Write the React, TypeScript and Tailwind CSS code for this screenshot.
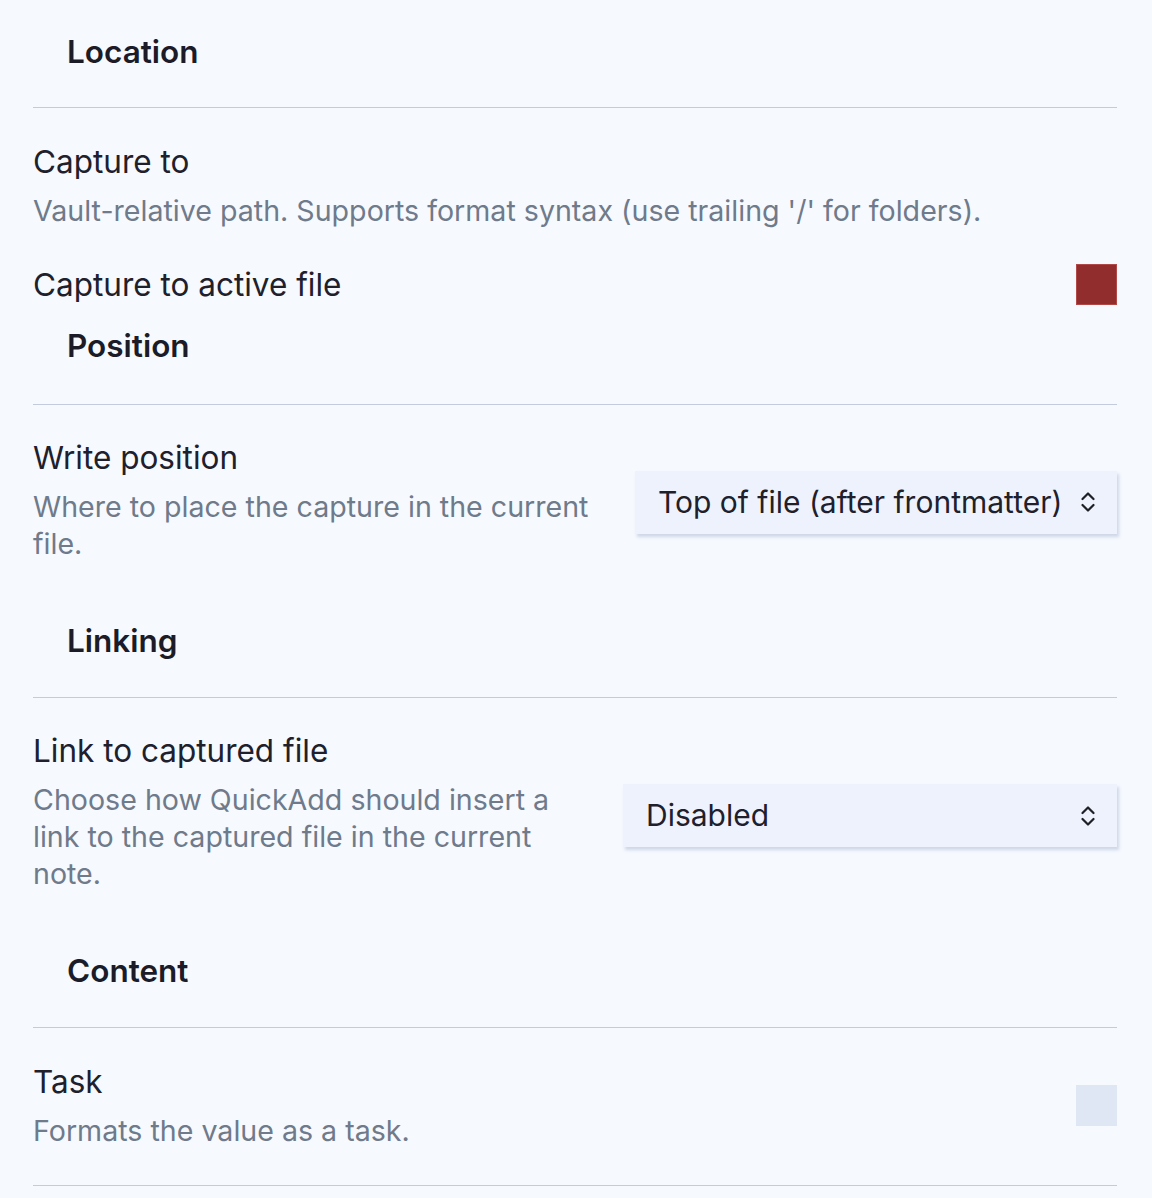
import React from "react";

const font = { fontFamily: "Inter, 'Noto Sans', sans-serif" };

function Heading({ title, top, bottom }: { title: string; top: string; bottom: string }) {
  return (
    <div className={`border-b border-[#c3cbdd] pl-[34px] ${top} ${bottom}`}>
      <div className="text-[31.5px] font-semibold leading-[36px] text-[#1c1c28]">{title}</div>
    </div>
  );
}

function Name({ children }: { children: React.ReactNode }) {
  return <div className="text-[31.5px] leading-[40px] text-[#20202c]">{children}</div>;
}

function Desc({ children }: { children: React.ReactNode }) {
  return <div className="mt-[10px] text-[28.6px] leading-[37px] text-[#6f7a8a]">{children}</div>;
}

// up/down chevrons drawn at the right end of a dropdown
function UpDown() {
  return (
    <svg width="14" height="24" viewBox="0 0 14 24" fill="none" stroke="#1f1f26" strokeWidth="2.2" strokeLinecap="round" strokeLinejoin="round">
      <path d="M1.5 9 7 3.5 12.5 9" />
      <path d="M1.5 15 7 20.5 12.5 15" />
    </svg>
  );
}

function Select({ value, width, shift }: { value: string; width: string; shift: string }) {
  return (
    <div
      className={`flex h-[63px] shrink-0 items-center justify-between bg-[#eef2fd] pl-[23px] pr-[22px] shadow-[2px_3px_3px_rgba(160,175,205,0.45)] ${width} ${shift}`}
    >
      <span className="text-[30px] text-[#20202c]">{value}</span>
      <UpDown />
    </div>
  );
}

export default function App() {
  return (
    <div className="min-h-screen bg-[#f6f9fe] pl-[33px] pr-[35px]" style={font}>
      <Heading title="Location" top="pt-[34px]" bottom="pb-[37px]" />
      <div className="pt-[34px] pb-[17px]">
        <Name>Capture to</Name>
        <Desc>Vault-relative path. Supports format syntax (use trailing '/' for folders).</Desc>
      </div>
      <div className="flex items-center justify-between pt-[18px] pb-[17px]">
        <Name>Capture to active file</Name>
        <div className="h-[41px] w-[41px] border border-[#b04848] bg-[#922d2d]" />
      </div>

      <Heading title="Position" top="pt-[6px]" bottom="pb-[40px]" />
      <div className="flex items-center justify-between gap-[40px] pt-[33px] pb-[17px]">
        <div className="max-w-[575px]">
          <Name>Write position</Name>
          <Desc>Where to place the capture in the current file.</Desc>
        </div>
        <Select value="Top of file (after frontmatter)" width="w-[482px]" shift="mt-[4px]" />
      </div>

      <Heading title="Linking" top="pt-[44px]" bottom="pb-[38px]" />
      <div className="flex items-center justify-between gap-[40px] pt-[33px] pb-[17px]">
        <div className="max-w-[575px]">
          <Name>Link to captured file</Name>
          <Desc>Choose how QuickAdd should insert a link to the captured file in the current note.</Desc>
        </div>
        <Select value="Disabled" width="w-[494px]" shift="mt-[8px]" />
      </div>

      <Heading title="Content" top="pt-[44px]" bottom="pb-[38px]" />
      <div className="flex items-center justify-between border-b border-[#c3cbdd] pt-[34px] pb-[36px]">
        <div>
          <Name>Task</Name>
          <Desc>Formats the value as a task.</Desc>
        </div>
        <div className="h-[41px] w-[41px] bg-[#dfe6f4]" />
      </div>
    </div>
  );
}
